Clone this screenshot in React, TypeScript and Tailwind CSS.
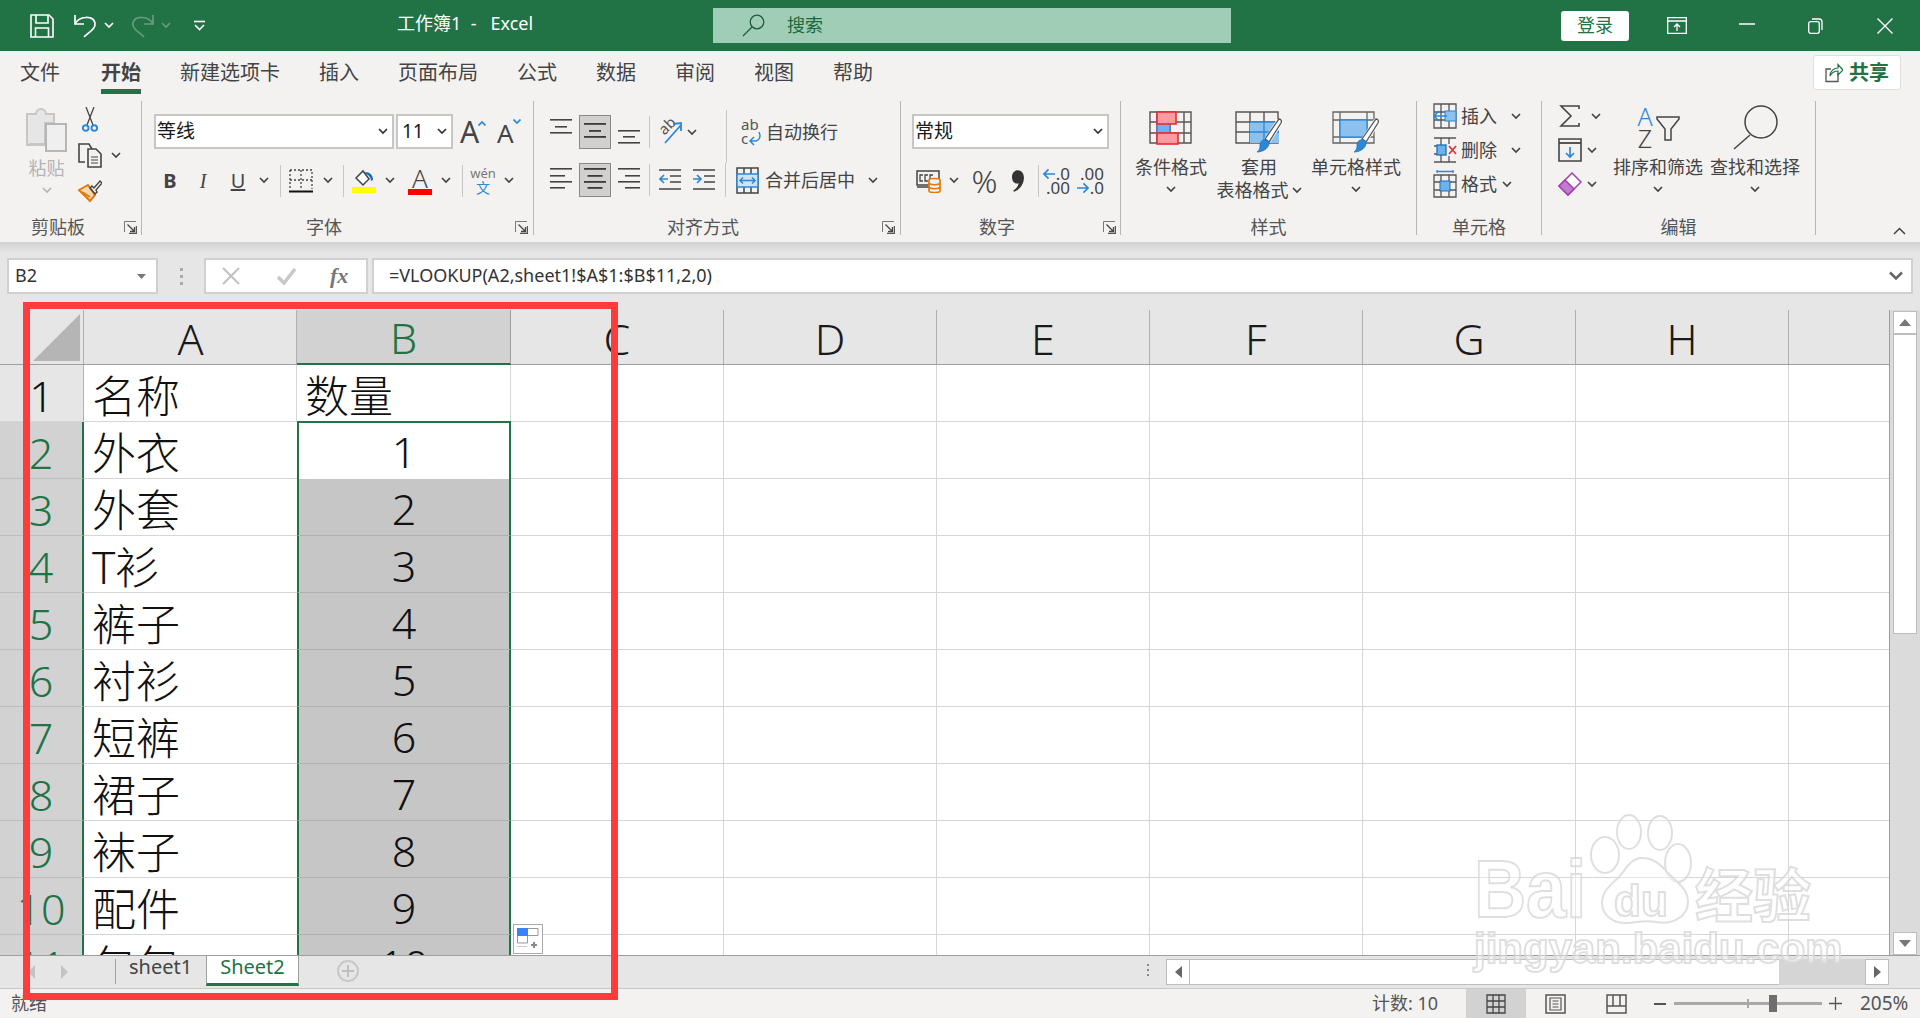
import React from "react";

function Chev({ color = "#444" }: { color?: string }) {
  return (
    <svg width="10" height="7" viewBox="0 0 10 7" className="shrink-0">
      <path d="M1 1l4 4 4-4" fill="none" stroke={color} strokeWidth="1.7" />
    </svg>
  );
}

function Launcher() {
  return (
    <svg width="13" height="13" viewBox="0 0 13 13" className="shrink-0">
      <path d="M0.5 11V0.5H12" fill="none" stroke="#777" />
      <path d="M12.5 5v7.5H5" fill="none" stroke="#555" strokeWidth="1.4" />
      <path d="M3.5 3.5l7 7M6 10.5h4.5V6" fill="none" stroke="#444" strokeWidth="1.3" />
    </svg>
  );
}

function VSep({ className }: { className: string }) {
  return <div className={`w-px bg-[#c8c6c4] shrink-0 ${className}`} />;
}

function Combo({ className, text, textClass }: { className: string; text: string; textClass?: string }) {
  return (
    <div className={`h-[35px] bg-white border-2 border-[#c8c6c4] flex items-center justify-between pl-[1px] pr-[4px] text-[19px] text-[#1a1a1a] shrink-0 ${className}`}>
      <span className={textClass}>{text}</span>
      <Chev color="#333" />
    </div>
  );
}

function Group({ className, label, labelClass, launcherClass, children }: { className: string; label: string; labelClass: string; launcherClass?: string; children: React.ReactNode }) {
  return (
    <div className={`h-[134px] border-r border-[#b8b6b4] flex flex-col shrink-0 ${className}`}>
      <div className="h-[110px]">{children}</div>
      <div className="h-[24px] pt-[8px] flex items-center">
        <div className={`text-center text-[18px] leading-[16px] text-[#555] ${labelClass}`}>{label}</div>
        {launcherClass && <div className={launcherClass}><Launcher /></div>}
      </div>
    </div>
  );
}

// alignment glyph: long / short lines, rows are y offsets inside a 34px tall box
function Lines({ rows, align }: { rows: number[]; align: "l" | "c" | "r" }) {
  const short = rows.length === 3 ? 12 : 15;
  return (
    <svg width="22" height="34" viewBox="0 0 22 34" className="shrink-0">
      {rows.map((y, i) => {
        const w = i % 2 === 1 ? short : 22;
        const x = align === "l" ? 0 : align === "r" ? 22 - w : (22 - w) / 2;
        return <rect key={y} x={x} y={y} width={w} height="1.6" fill="#444" />;
      })}
    </svg>
  );
}

function ToggleBtn({ rows }: { rows: number[] }) {
  const short = rows.length === 3 ? 12 : 15;
  return (
    <div className="w-[32px] h-[34px] ml-[7px] mr-[7px] bg-[#d2d0ce] border border-[#8a8886] flex items-center justify-center shrink-0">
      <svg width="22" height="32" viewBox="0 0 22 32">
        {rows.map((y, i) => {
          const w = i % 2 === 1 ? short : 22;
          return <rect key={y} x={(22 - w) / 2} y={y} width={w} height="1.8" fill="#3b3a39" />;
        })}
      </svg>
    </div>
  );
}

function BigBtn({ className, icon, children }: { className: string; icon: React.ReactNode; children: React.ReactNode }) {
  return (
    <div className={`flex flex-col items-center pt-[10px] shrink-0 ${className}`}>
      <div className="h-[42px] flex items-start">{icon}</div>
      <div className="mt-[3px] text-[18px] leading-[22px] text-[#444] text-center whitespace-nowrap">{children}</div>
    </div>
  );
}

function SmallChevBelow() {
  return (
    <div className="h-[22px] flex items-center justify-center">
      <Chev />
    </div>
  );
}

/* ---------- drawn icons ---------- */

const SaveIcon = () => (
  <svg width="24" height="24" viewBox="0 0 24 24" fill="none" stroke="#fff" strokeWidth="1.6">
    <path d="M1 1h18l4 4v18H1z" />
    <path d="M6 1v8h12V1M5.500 23v-9h13v9" />
  </svg>
);
const UndoIcon = () => (
  <svg width="24" height="25" viewBox="0 0 24 25" fill="none" stroke="#fff" strokeWidth="1.7">
    <path d="M2 2v9h9" />
    <path d="M2 11C6 3 20 2 22 10c1 6-6 9-11 14" />
  </svg>
);
const RedoIcon = () => (
  <svg width="24" height="25" viewBox="0 0 24 25" fill="none" stroke="#fff" strokeWidth="1.7" opacity="0.3">
    <path d="M22 2v9h-9" />
    <path d="M22 11C18 3 4 2 2 10c-1 6 6 9 11 14" />
  </svg>
);

const PasteIcon = () => (
  <svg width="41" height="46" viewBox="0 0 41 46">
    <path d="M1 7h9a5 5 0 0 1 10 0h8v9H19v22H1z" fill="#e6e6e6" stroke="#c6c6c6" strokeWidth="2" />
    <path d="M3 36h16v3H3z" fill="#c6c6c6" />
    <rect x="20" y="17" width="20" height="27" fill="#efefef" stroke="#b6b6b6" strokeWidth="2" />
  </svg>
);
const ScissorsIcon = () => (
  <svg width="16" height="25" viewBox="0 0 16 25" fill="none">
    <path d="M4 0l7 18M12 0L5 18" stroke="#444" strokeWidth="1.3" />
    <circle cx="3.700" cy="21" r="2.800" stroke="#2b88d8" strokeWidth="1.900" />
    <circle cx="12.300" cy="21" r="2.800" stroke="#2b88d8" strokeWidth="1.900" />
  </svg>
);
const CopyIcon = () => (
  <svg width="24" height="25" viewBox="0 0 24 25" fill="none" stroke="#444" strokeWidth="1.6">
    <path d="M7 19H1V1h10l3 5" />
    <path d="M10 6h8l5 5v13H10z" fill="#f3f2f1" />
    <path d="M13 14h7M13 17h7M13 20h7" strokeWidth="1.2" />
  </svg>
);
const PainterIcon = () => (
  <svg width="24" height="24" viewBox="0 0 24 24">
    <path d="M1 11l9-5 7 10-5 6z" fill="#f8d9b4" stroke="#e3780c" strokeWidth="2" />
    <path d="M4 13l8 5" stroke="#e3780c" strokeWidth="2" />
    <path d="M12 9l2-2 2 2 6-7 2 2-6 7 1 2-2 2z" fill="none" stroke="#444" strokeWidth="1.400" />
  </svg>
);
const BorderIcon = () => (
  <svg width="24" height="24" viewBox="0 0 24 24" fill="none">
    <path d="M1 1h22v19M1 1v19M12 1v19M1 11h22" stroke="#444" strokeWidth="1.300" strokeDasharray="2 2" />
    <path d="M0 22.500h24" stroke="#111" strokeWidth="2" />
  </svg>
);
const FillIcon = () => (
  <svg width="24" height="24" viewBox="0 0 24 24">
    <path d="M4 9l7-7 6 8-6 6z" fill="#fff" stroke="#444" strokeWidth="1.500" />
    <path d="M13 3c5 0 8 3 8 8l-2 1c0-3-2-6-5-7z" fill="#106ebe" />
    <rect x="0" y="18" width="24" height="6" fill="#ffff00" />
  </svg>
);
const CurrencyIcon = () => (
  <svg width="25" height="24" viewBox="0 0 25 24" fill="none">
    <rect x="1" y="2" width="22" height="14" stroke="#444" strokeWidth="1.500" />
    <path d="M7 6H4v6h3M12 6H9v6h3M17 6h-3v6" stroke="#444" strokeWidth="1.300" />
    <path d="M1 18h13" stroke="#444" strokeWidth="1.500" />
    <path d="M13 11c0-2 11-2 11 0v11c0 2-11 2-11 0z" fill="#f3f2f1" stroke="#e3780c" strokeWidth="1.700" />
    <path d="M13 14.500c3 1.500 8 1.500 11 0M13 18.500c3 1.500 8 1.500 11 0" stroke="#e3780c" strokeWidth="1.700" />
  </svg>
);
const CondIcon = () => (
  <svg width="44" height="34" viewBox="0 0 44 34" fill="none">
    <path d="M1 1h41v31H1zM8 1v31M21 1v31M35 1v31M1 11h41M1 22h41" stroke="#555" strokeWidth="1.400" />
    <rect x="8" y="11" width="13" height="11" fill="#6fb1ea" stroke="#2b7cd3" />
    <rect x="8" y="1" width="19" height="12" fill="#ff9aa2" stroke="#e62e2e" strokeWidth="1.600" />
    <rect x="8" y="22" width="21" height="11" fill="#ff9aa2" stroke="#e62e2e" strokeWidth="1.600" />
  </svg>
);
const BrushStroke = () => (
  <g>
    <path d="M45 10L32 30" stroke="#fff" strokeWidth="7" />
    <path d="M44 8c2 0 3 2 2 4L34 31l-4-3z" fill="#fff" stroke="#555" strokeWidth="1.300" />
    <path d="M29 29c3-1 6 1 5 4-1 5-7 8-12 8 3-2 3-5 3-7 0-3 2-5 4-5z" fill="#2b88d8" stroke="#1c6fb8" strokeWidth="0.800" />
  </g>
);
const TableStyleIcon = () => (
  <svg width="48" height="42" viewBox="0 0 48 42" fill="none">
    <path d="M1 1h42v31H1zM15 1v31M29 1v31M1 11h42M1 21h42" stroke="#555" strokeWidth="1.400" />
    <rect x="15" y="11" width="29" height="21" fill="#8cc0ef" />
    <path d="M15 11h29M15 21h29M29 11v21" stroke="#2b88d8" strokeWidth="1.300" />
    <BrushStroke />
  </svg>
);
const CellStyleIcon = () => (
  <svg width="48" height="42" viewBox="0 0 48 42" fill="none">
    <path d="M1 1h41v31H1zM8 1v31M35 1v31M1 9h41M1 26h41" stroke="#666" strokeWidth="1.300" />
    <rect x="8" y="9" width="27" height="17" fill="#8cc0ef" stroke="#2b88d8" strokeWidth="1.300" />
    <BrushStroke />
  </svg>
);
const InsertIcon = () => (
  <svg width="24" height="26" viewBox="0 0 24 26" fill="none">
    <path d="M1 1h22v24H1zM1 9h22M1 17h22M8 1v24M16 1v24" stroke="#555" strokeWidth="1.300" />
    <rect x="12" y="8" width="11" height="10" fill="#8cc0ef" stroke="#2b88d8" />
    <path d="M14 13H1M6 8l-5 5 5 5" stroke="#2b88d8" strokeWidth="1.700" />
  </svg>
);
const DeleteIcon = () => (
  <svg width="24" height="26" viewBox="0 0 24 26" fill="none">
    <path d="M1 1h22M1 25h22M1 9h10M1 17h10M8 1v24M16 1v6M16 19v6" stroke="#555" strokeWidth="1.300" />
    <rect x="4" y="8" width="9" height="10" fill="#6fb1ea" stroke="#1c6fb8" strokeWidth="1.300" />
    <path d="M16 9l7 8M23 9l-7 8" stroke="#e8323c" strokeWidth="1.800" />
  </svg>
);
const FormatIcon = () => (
  <svg width="24" height="28" viewBox="0 0 24 28" fill="none">
    <path d="M1 5h22v22H1zM1 12h22M1 20h22M8 5v22M16 5v22" stroke="#555" strokeWidth="1.300" />
    <rect x="7" y="11" width="10" height="10" fill="#6fb1ea" stroke="#1c6fb8" />
    <path d="M4 1.500h16M4 0v3M20 0v3" stroke="#2b88d8" strokeWidth="1.300" />
  </svg>
);
const EraserIcon = () => (
  <svg width="24" height="24" viewBox="0 0 24 24">
    <path d="M14 1l9 9-13 13-9-9z" fill="#fff" stroke="#a23fb0" strokeWidth="1.500" />
    <path d="M7 8l9 9-6 6-9-9z" fill="#c27bd0" stroke="#a23fb0" strokeWidth="1.500" />
  </svg>
);

/* ---------- data ---------- */

const TABS = ["新建选项卡", "插入", "页面布局", "公式", "数据", "审阅", "视图", "帮助"];
const COLS = ["C", "D", "E", "F", "G", "H"];
const ROWS: [string, string, string][] = [
  ["2", "外衣", "1"],
  ["3", "外套", "2"],
  ["4", "T衫", "3"],
  ["5", "裤子", "4"],
  ["6", "衬衫", "5"],
  ["7", "短裤", "6"],
  ["8", "裙子", "7"],
  ["9", "袜子", "8"],
  ["10", "配件", "9"],
  ["11", "包包", "10"],
];

function BlankCells() {
  return (
    <>
      {COLS.map((c) => (
        <div key={c} className="w-[213px] h-full border-r border-[#d6d6d6] shrink-0" />
      ))}
      <div className="flex-1 h-full" />
    </>
  );
}

function Ribbon() {
  return (
    <div className="h-[141px] bg-[#f3f2f1] flex items-start">
      {/* clipboard */}
      <Group className="w-[142px]" label="剪贴板" labelClass="w-[116px]" launcherClass="ml-[8px]">
        <div className="flex pl-[26px] pt-[6px]">
          <div className="w-[41px] flex flex-col items-center shrink-0">
            <PasteIcon />
            <div className="mt-[4px] text-[18px] leading-[22px] text-[#b4b4b4]">粘贴</div>
            <div className="mt-[8px]"><Chev color="#b4b4b4" /></div>
          </div>
          <div className="ml-[11px] flex flex-col">
            <div className="ml-[4px] h-[25px]"><ScissorsIcon /></div>
            <div className="mt-[11px] h-[25px] flex items-center">
              <CopyIcon />
              <div className="ml-[9px]"><Chev /></div>
            </div>
            <div className="mt-[11px]"><PainterIcon /></div>
          </div>
        </div>
      </Group>

      {/* font */}
      <Group className="w-[392px]" label="字体" labelClass="w-[364px]" launcherClass="ml-[9px]">
        <div className="pl-[12px] pt-[13px]">
          <div className="flex items-center">
            <Combo className="w-[240px]" text="等线" />
            <Combo className="w-[57px] ml-[2px]" text="11" textClass="ml-[3px]" />
            <div className="ml-[7px] w-[24px] h-[34px] flex items-start shrink-0">
              <span className="text-[30px] leading-[34px] text-[#444]">A</span>
              <svg width="8" height="5" viewBox="0 0 8 5" className="mt-[6px] -ml-[1px] shrink-0"><path d="M0.500 4.500L4 1l3.500 3.500" fill="none" stroke="#2b88d8" strokeWidth="1.700" /></svg>
            </div>
            <div className="ml-[13px] w-[22px] h-[34px] flex items-start shrink-0">
              <span className="text-[26px] leading-[36px] text-[#444]">A</span>
              <svg width="8" height="5" viewBox="0 0 8 5" className="mt-[4px] -ml-[1px] shrink-0"><path d="M0.500 0.500L4 4l3.500-3.500" fill="none" stroke="#2b88d8" strokeWidth="1.700" /></svg>
            </div>
          </div>
          <div className="mt-[14px] h-[35px] flex items-center">
            <div className="w-[32px] text-center text-[20px] font-bold text-[#444]">B</div>
            <div className="w-[34px] text-center text-[20px] italic text-[#444] [font-family:'Liberation_Serif',serif]">I</div>
            <div className="w-[36px] text-center text-[20px] underline text-[#444]">U</div>
            <div className="w-[16px] flex justify-center"><Chev /></div>
            <VSep className="ml-[8px] h-[32px]" />
            <div className="ml-[8px] shrink-0"><BorderIcon /></div>
            <div className="ml-[10px]"><Chev /></div>
            <VSep className="ml-[10px] h-[32px]" />
            <div className="ml-[8px] shrink-0"><FillIcon /></div>
            <div className="ml-[9px]"><Chev /></div>
            <div className="ml-[13px] w-[24px] h-[28px] flex flex-col items-center shrink-0">
              <span className="text-[26px] leading-[22px] font-light text-[#444]">A</span>
              <div className="w-[24px] h-[6px] bg-[#ff0000]" />
            </div>
            <div className="ml-[9px]"><Chev /></div>
            <VSep className="ml-[11px] h-[32px]" />
            <div className="ml-[9px] w-[22px] flex flex-col items-center shrink-0">
              <span className="text-[13px] leading-[13px] text-[#777]">wén</span>
              <span className="text-[14px] leading-[15px] text-[#2b88d8]">文</span>
            </div>
            <div className="ml-[10px]"><Chev /></div>
          </div>
        </div>
      </Group>

      {/* alignment */}
      <Group className="w-[367px]" label="对齐方式" labelClass="w-[338px]" launcherClass="ml-[10px]">
        <div className="pl-[16px] pt-[14px]">
          <div className="h-[34px] flex items-center">
            <Lines rows={[4, 11, 17]} align="c" />
            <ToggleBtn rows={[7, 14, 20]} />
            <Lines rows={[15, 21, 27]} align="c" />
            <VSep className="ml-[9px] h-[32px]" />
            <div className="ml-[8px] w-[25px] h-[26px] relative shrink-0">
              <span className="absolute left-0 top-[-1px] text-[15px] leading-[15px] text-[#555] -rotate-45 origin-center">ab</span>
              <svg width="25" height="26" viewBox="0 0 25 26" fill="none" className="absolute left-0 top-0">
                <path d="M7 24L23 6M15 5l8-1v8" stroke="#2b88d8" strokeWidth="1.800" />
              </svg>
            </div>
            <div className="ml-[4px]"><Chev /></div>
            <VSep className="ml-[29px] -mt-[5px] h-[53px] self-start" />
            <div className="ml-[14px] w-[21px] h-[28px] relative text-[15px] leading-[13px] text-[#555] shrink-0">
              <span className="absolute left-0 top-0">ab</span>
              <span className="absolute left-0 top-[14px]">c</span>
              <svg width="21" height="28" viewBox="0 0 21 28" fill="none" className="absolute left-0 top-0">
                <path d="M18 14c2 4 1 8-3 9H9M13 19l-4 4 4 4" stroke="#2b88d8" strokeWidth="1.500" />
              </svg>
            </div>
            <span className="ml-[4px] text-[18px] text-[#444] whitespace-nowrap">自动换行</span>
          </div>
          <div className="mt-[14px] h-[34px] flex items-center">
            <Lines rows={[5, 12, 18, 24]} align="l" />
            <ToggleBtn rows={[4, 11, 17, 23]} />
            <Lines rows={[5, 12, 18, 24]} align="r" />
            <VSep className="ml-[9px] h-[32px]" />
            <svg width="22" height="24" viewBox="0 0 22 24" fill="none" className="ml-[9px] shrink-0">
              <path d="M0 2h22M11 8h11M11 14h11M0 21h22" stroke="#444" strokeWidth="1.600" />
              <path d="M9 11H1M5 7l-4 4 4 4" stroke="#2b88d8" strokeWidth="1.700" />
            </svg>
            <svg width="22" height="24" viewBox="0 0 22 24" fill="none" className="ml-[12px] shrink-0">
              <path d="M0 2h22M11 8h11M11 14h11M0 21h22" stroke="#444" strokeWidth="1.600" />
              <path d="M0 11h8M4 7l4 4-4 4" stroke="#2b88d8" strokeWidth="1.700" />
            </svg>
            <VSep className="ml-[10px] h-[34px]" />
            <svg width="23" height="27" viewBox="0 0 23 27" fill="none" className="ml-[10px] shrink-0">
              <path d="M1 1h21v25H1zM8 1v6M15 1v6M8 20v6M15 20v6" stroke="#444" strokeWidth="1.500" />
              <rect x="1" y="7" width="21" height="13" fill="#cde4f7" stroke="#2b88d8" strokeWidth="1.500" />
              <path d="M4 13.500h15M7 10.500l-3 3 3 3M16 10.500l3 3-3 3" stroke="#2b88d8" strokeWidth="1.500" />
            </svg>
            <span className="ml-[6px] w-[90px] text-[18px] text-[#444] whitespace-nowrap shrink-0">合并后居中</span>
            <div className="ml-[13px]"><Chev /></div>
          </div>
        </div>
      </Group>

      {/* number */}
      <Group className="w-[220px]" label="数字" labelClass="w-[192px]" launcherClass="ml-[10px]">
        <div className="pl-[11px] pt-[13px]">
          <Combo className="w-[197px]" text="常规" />
          <div className="mt-[14px] h-[35px] flex items-center">
            <div className="ml-[4px] shrink-0"><CurrencyIcon /></div>
            <div className="ml-[8px]"><Chev /></div>
            <span className="ml-[12px] w-[27px] text-[32px] leading-[35px] font-light text-[#444] text-center">%</span>
            <svg width="13" height="24" viewBox="0 0 12 22" className="ml-[14px] shrink-0"><path d="M5 1c4 0 6 3 6 7 0 6-4 11-9 13l-1-1c3-2 5-5 5-7-3 1-6-1-6-6 0-4 3-6 5-6z" fill="#333" /></svg>
            <VSep className="ml-[13px] h-[32px]" />
            <div className="ml-[7px] w-[24px] flex flex-col items-end shrink-0 text-[17px] leading-[13px] text-[#444]">
              <div className="flex items-center">
                <svg width="12" height="12" viewBox="0 0 13 12" fill="none"><path d="M13 6H1M6 1L1 6l5 5" stroke="#2b88d8" strokeWidth="1.800" /></svg>
                <span className="ml-[1px]">.0</span>
              </div>
              <span className="mt-[1px]">.00</span>
            </div>
            <div className="ml-[10px] w-[24px] flex flex-col items-end shrink-0 text-[17px] leading-[13px] text-[#444]">
              <span>.00</span>
              <div className="flex items-center mt-[1px]">
                <svg width="12" height="12" viewBox="0 0 13 12" fill="none"><path d="M0 6h12M7 1l5 5-5 5" stroke="#2b88d8" strokeWidth="1.800" /></svg>
                <span className="ml-[1px]">.0</span>
              </div>
            </div>
          </div>
        </div>
      </Group>

      {/* styles */}
      <Group className="w-[296px]" label="样式" labelClass="w-[295px]">
        <div className="flex pl-[7px]">
          <BigBtn className="w-[86px]" icon={<CondIcon />}>
            条件格式
            <SmallChevBelow />
          </BigBtn>
          <BigBtn className="w-[90px]" icon={<TableStyleIcon />}>
            套用
            <div className="mt-[1px] flex items-center justify-center">表格格式<span className="ml-[3px]"><Chev /></span></div>
          </BigBtn>
          <BigBtn className="w-[104px]" icon={<CellStyleIcon />}>
            单元格样式
            <SmallChevBelow />
          </BigBtn>
        </div>
      </Group>

      {/* cells */}
      <Group className="w-[125px]" label="单元格" labelClass="w-[124px]">
        <div className="pl-[16px] flex flex-col gap-[4px]">
          <div className="h-[30px] flex items-center">
            <InsertIcon />
            <span className="ml-[4px] text-[18px] text-[#444]">插入</span>
            <div className="ml-[14px]"><Chev /></div>
          </div>
          <div className="h-[30px] flex items-center">
            <DeleteIcon />
            <span className="ml-[4px] text-[18px] text-[#444]">删除</span>
            <div className="ml-[14px]"><Chev /></div>
          </div>
          <div className="h-[30px] flex items-center">
            <FormatIcon />
            <span className="ml-[4px] text-[18px] text-[#444]">格式</span>
            <div className="ml-[5px]"><Chev /></div>
          </div>
        </div>
      </Group>

      {/* editing */}
      <Group className="w-[274px]" label="编辑" labelClass="w-[273px]">
        <div className="flex pl-[16px]">
          <div className="w-[43px] flex flex-col gap-[4px] shrink-0">
            <div className="h-[30px] flex items-center">
              <svg width="24" height="24" viewBox="0 0 24 24" fill="none" className="shrink-0"><path d="M21 5V2H3l10 10L3 22h18v-3" stroke="#444" strokeWidth="1.600" /></svg>
              <div className="ml-[9px]"><Chev /></div>
            </div>
            <div className="h-[30px] flex items-center">
              <svg width="24" height="24" viewBox="0 0 24 24" fill="none" className="shrink-0">
                <path d="M1 1h22v22H1z" stroke="#444" strokeWidth="1.600" />
                <path d="M1 5h22" stroke="#444" strokeWidth="1.800" />
                <path d="M12 9v10M8 15l4 4 4-4" stroke="#2b88d8" strokeWidth="1.700" />
              </svg>
              <div className="ml-[5px]"><Chev /></div>
            </div>
            <div className="h-[30px] flex items-center">
              <EraserIcon />
              <div className="ml-[5px]"><Chev /></div>
            </div>
          </div>
          <div className="ml-[12px] w-[90px] flex flex-col items-center pt-[4px] shrink-0">
            <div className="h-[45px] w-[44px] flex">
              <div className="w-[18px] flex flex-col items-center text-[25px] leading-[22px]">
                <span className="text-[#2b88d8] font-light">A</span>
                <span className="text-[#444] font-light">Z</span>
              </div>
              <svg width="24" height="26" viewBox="0 0 24 26" fill="none" className="mt-[11px] ml-[2px] shrink-0">
                <path d="M1 1h22v2l-8 10v11H9V13L1 3z" stroke="#444" strokeWidth="1.500" />
              </svg>
            </div>
            <div className="mt-[6px] text-[18px] leading-[22px] text-[#444] whitespace-nowrap">排序和筛选</div>
            <SmallChevBelow />
          </div>
          <div className="ml-[7px] w-[90px] flex flex-col items-center pt-[4px] shrink-0">
            <svg width="46" height="45" viewBox="0 0 46 45" fill="none">
              <circle cx="29" cy="17" r="16" stroke="#444" strokeWidth="1.500" />
              <path d="M18 30L2 44" stroke="#444" strokeWidth="1.500" />
            </svg>
            <div className="mt-[6px] text-[18px] leading-[22px] text-[#444] whitespace-nowrap">查找和选择</div>
            <SmallChevBelow />
          </div>
        </div>
      </Group>

      <div className="flex-1 h-[134px] flex items-end justify-end pr-[14px]">
        <svg width="13" height="8" viewBox="0 0 13 8" fill="none"><path d="M1 7l5.500-5.500L12 7" stroke="#444" strokeWidth="1.500" /></svg>
      </div>
    </div>
  );
}

function Sheet() {
  return (
    <div className="flex-1 min-w-0 bg-white flex flex-col overflow-hidden [font-family:'Noto_Sans','Noto_Sans_CJK_SC',sans-serif] font-light">
      {/* column headers */}
      <div className="h-[55px] flex shrink-0 bg-[#e6e6e6] border-b border-[#9e9e9e] text-[43px] leading-[50px] text-[#1a1a1a]">
        <div className="w-[84px] h-full border-r border-[#b0b0b0] flex items-end justify-end pr-[3px] pb-[3px] shrink-0">
          <svg width="47" height="47" viewBox="0 0 47 47"><path d="M47 0v47H0z" fill="#b5b5b5" /></svg>
        </div>
        <div className="w-[213px] h-full border-r border-[#b0b0b0] pl-[1px] pt-[4px] text-center shrink-0">A</div>
        <div className="w-[214px] h-[55px] bg-[#d2d2d2] border-r border-[#9e9e9e] border-b-[2px] border-b-[#217346] text-[#217346] pt-[3px] text-center shrink-0">B</div>
        {COLS.map((c) => (
          <div key={c} className="w-[213px] h-full border-r border-[#b0b0b0] pt-[4px] text-center shrink-0">{c}</div>
        ))}
      </div>

      {/* row 1 */}
      <div className="h-[57px] flex shrink-0 border-b border-[#d6d6d6] text-[43px] leading-[50px] text-[#111]">
        <div className="w-[84px] h-full bg-[#e6e6e6] border-r border-[#b0b0b0] text-center pt-[6px] shrink-0">1</div>
        <div className="w-[213px] h-full border-r border-[#d6d6d6] pl-[8px] pt-[6px] text-[44px] shrink-0">名称</div>
        <div className="w-[214px] h-full border-r border-[#d6d6d6] pl-[8px] pt-[6px] text-[44px] shrink-0">数量</div>
        <BlankCells />
      </div>

      {/* data rows */}
      {ROWS.map(([n, name, qty], i) => (
        <div key={n} className="h-[57px] flex shrink-0 border-b border-[#d6d6d6] text-[43px] leading-[50px] text-[#111]">
          <div className="w-[84px] h-[57px] bg-[#d2d2d2] border-r-2 border-[#217346] border-b border-b-[#bdbdbd] text-[#217346] text-center pt-[6px] shrink-0">{n}</div>
          <div className="w-[213px] h-full pl-[8px] pt-[6px] text-[44px] shrink-0">{name}</div>
          <div
            className={
              i === 0
                ? "w-[214px] h-[58px] -mt-[1px] bg-white border-x-2 border-t-2 border-[#217346] text-center pt-[4px] shrink-0"
                : "w-[214px] h-[57px] bg-[#c6c6c6] border-x-2 border-[#217346] border-b border-b-[#b0b0b0] text-center pt-[5px] shrink-0"
            }
          >
            {qty}
          </div>
          <BlankCells />
        </div>
      ))}
    </div>
  );
}

export default function App() {
  return (
    <div className="relative w-[1920px] h-[1018px] overflow-hidden flex flex-col bg-[#e6e6e6] [font-family:'Noto_Sans','Noto_Sans_CJK_SC',sans-serif]">
      {/* title bar */}
      <div className="h-[51px] bg-[#217346] flex items-center pl-[30px] text-white shrink-0">
        <SaveIcon />
        <div className="ml-[19px]"><UndoIcon /></div>
        <div className="ml-[7px]"><Chev color="#fff" /></div>
        <div className="ml-[17px]"><RedoIcon /></div>
        <div className="ml-[6px] opacity-30"><Chev color="#fff" /></div>
        <svg width="11" height="11" viewBox="0 0 11 11" fill="none" className="ml-[23px] shrink-0"><path d="M0 1.500h11" stroke="#fff" strokeWidth="1.600" /><path d="M1 5l4.500 4.500L10 5" stroke="#fff" strokeWidth="1.600" /></svg>
        <div className="ml-[192px] w-[316px] text-[18px] whitespace-pre shrink-0 -mt-[5px]">工作簿1  -   Excel</div>
        <div className="w-[518px] h-[35px] bg-[#a0cdb5] flex items-center pl-[29px] -mt-[1px] shrink-0">
          <svg width="23" height="23" viewBox="0 0 23 23" fill="none"><circle cx="15" cy="8" r="6.800" stroke="#1d5c3a" strokeWidth="1.300" /><path d="M10 13L1 22" stroke="#1d5c3a" strokeWidth="1.300" /></svg>
          <span className="ml-[22px] text-[18px] text-[#1a6a3f]">搜索</span>
        </div>
        <div className="ml-[330px] w-[68px] h-[30px] rounded-[3px] bg-white flex items-center justify-center text-[18px] text-[#217346] shrink-0">登录</div>
        <svg width="20" height="17" viewBox="0 0 20 17" fill="none" className="ml-[38px] shrink-0"><path d="M0.700 0.700h18.600v15.600H0.700zM0.700 4h18.600" stroke="#fff" strokeWidth="1.300" /><path d="M10 14V7M7 10l3-3 3 3" stroke="#fff" strokeWidth="1.300" /></svg>
        <svg width="16" height="2" viewBox="0 0 16 2" className="ml-[52px] -mt-[3px] shrink-0"><path d="M0 1h16" stroke="#fff" strokeWidth="1.500" /></svg>
        <svg width="15" height="16" viewBox="0 0 15 16" fill="none" className="ml-[53px] shrink-0"><rect x="0.700" y="3.700" width="10.600" height="11.600" rx="2" stroke="#fff" strokeWidth="1.300" /><path d="M4 1h7a3 3 0 0 1 3 3v8" stroke="#fff" strokeWidth="1.300" /></svg>
        <svg width="16" height="16" viewBox="0 0 16 16" fill="none" className="ml-[54px] shrink-0"><path d="M0.500 0.500l15 15M15.500 0.500l-15 15" stroke="#fff" strokeWidth="1.400" /></svg>
      </div>

      {/* tab row */}
      <div className="h-[50px] bg-[#f3f2f1] flex pl-[20px] pt-[9px] gap-[39px] text-[20px] leading-[26px] text-[#444] shrink-0">
        <span>文件</span>
        <span className="ml-[2px] h-[34px] border-b-[5px] border-[#217346] font-bold">开始</span>
        {TABS.map((t) => (
          <span key={t}>{t}</span>
        ))}
        <div className="ml-auto mr-[19px] -mt-[5px] w-[88px] h-[35px] rounded-[3px] bg-white border border-[#e1dfdd] flex items-center justify-center">
          <svg width="18" height="20" viewBox="0 0 18 20" fill="none" className="shrink-0"><path d="M13 10v8.500H1V6h5" stroke="#555" strokeWidth="1.300" /><path d="M5 13c0-5 4-8 8-8V1.500L18 7l-5 5V8c-3 0-6 1-8 5z" stroke="#217346" strokeWidth="1.200" /></svg>
          <span className="ml-[6px] font-bold text-[#217346]">共享</span>
        </div>
      </div>

      <Ribbon />

      {/* formula bar */}
      <div className="h-[68px] shrink-0 bg-gradient-to-b from-[#d2d2d2] from-0% to-[#e6e6e6] to-[16%] pt-[16px] pl-[7px] flex items-start">
        <div className="w-[151px] h-[36px] bg-white border-2 border-[#d0d0d0] flex items-center justify-between pl-[6px] pr-[10px] text-[18px] leading-[24px] text-[#333] shrink-0">
          <span className="-mt-[2px]">B2</span>
          <svg width="9" height="5" viewBox="0 0 9 5"><path d="M0 0h9L4.500 5z" fill="#777" /></svg>
        </div>
        <div className="w-[46px] h-[36px] flex flex-col items-center justify-center gap-[4px] shrink-0">
          <div className="w-[3px] h-[3px] bg-[#aaa]" />
          <div className="w-[3px] h-[3px] bg-[#aaa]" />
          <div className="w-[3px] h-[3px] bg-[#aaa]" />
        </div>
        <div className="w-[164px] h-[36px] bg-white border-2 border-[#d0d0d0] flex items-center pl-[16px] shrink-0">
          <svg width="18" height="18" viewBox="0 0 18 18" fill="none"><path d="M1 1l16 16M17 1L1 17" stroke="#c0c0c0" strokeWidth="2" /></svg>
          <svg width="20" height="18" viewBox="0 0 20 18" fill="none" className="ml-[37px]"><path d="M1 10l6 6L18 2" stroke="#c8c8c8" strokeWidth="3.500" /></svg>
          <span className="ml-[33px] text-[22px] leading-[26px] italic font-bold text-[#777] [font-family:'Liberation_Serif',serif]">fx</span>
        </div>
        <div className="ml-[4px] w-[1541px] h-[36px] bg-white border-2 border-[#d0d0d0] flex items-center justify-between pl-[15px] pr-[8px] text-[18px] leading-[24px] text-[#333] shrink-0">
          <span className="-mt-[2px]">=VLOOKUP(A2,sheet1!$A$1:$B$11,2,0)</span>
          <svg width="14" height="11" viewBox="0 0 14 11" fill="none"><path d="M1 1.500l6 6 6-6" stroke="#666" strokeWidth="2.500" /></svg>
        </div>
      </div>

      {/* sheet + vertical scroll */}
      <div className="h-[645px] flex shrink-0">
        <Sheet />
        <div className="w-[31px] h-full bg-[#dbdbdb] border-l border-[#9e9e9e] flex flex-col items-center pt-[1px] shrink-0">
          <div className="w-[24px] h-[23px] bg-white border border-[#bdbdbd] flex items-center justify-center">
            <svg width="12" height="7" viewBox="0 0 12 7"><path d="M0 7h12L6 0z" fill="#777" /></svg>
          </div>
          <div className="w-[24px] h-[300px] bg-white border border-[#bdbdbd]" />
          <div className="mt-auto w-[24px] h-[23px] bg-white border border-[#bdbdbd] flex items-center justify-center">
            <svg width="12" height="7" viewBox="0 0 12 7"><path d="M0 0h12L6 7z" fill="#777" /></svg>
          </div>
        </div>
      </div>

      {/* sheet tabs */}
      <div className="h-[34px] shrink-0 bg-[#e6e6e6] border-t border-[#9e9e9e] border-b border-b-[#c8c8c8] flex items-start text-[20px] leading-[22px]">
        <svg width="7" height="14" viewBox="0 0 7 14" className="ml-[28px] mt-[9px] shrink-0"><path d="M7 0v14L0 7z" fill="#c4c4c4" /></svg>
        <svg width="7" height="14" viewBox="0 0 7 14" className="ml-[26px] mt-[9px] shrink-0"><path d="M0 0v14l7-7z" fill="#c4c4c4" /></svg>
        <div className="ml-[47px] mt-[3px] w-px h-[25px] bg-[#a0a0a0] shrink-0" />
        <span className="ml-[13px] w-[77px] text-[#444] shrink-0">sheet1</span>
        <div className="w-[93px] h-[30px] bg-white border-x border-[#a0a0a0] border-b-[3px] border-b-[#217346] text-center text-[#217346] shrink-0">Sheet2</div>
        <div className="ml-[38px] mt-[4px] w-[22px] h-[22px] rounded-full border-2 border-[#c8c8c8] flex items-center justify-center shrink-0">
          <svg width="12" height="12" viewBox="0 0 12 12"><path d="M6 0v12M0 6h12" stroke="#c0c0c0" strokeWidth="2" /></svg>
        </div>
        <div className="ml-[788px] mt-[8px] flex flex-col gap-[3px] shrink-0">
          <div className="w-[2px] h-[2px] bg-[#888]" />
          <div className="w-[2px] h-[2px] bg-[#888]" />
          <div className="w-[2px] h-[2px] bg-[#888]" />
        </div>
        <div className="ml-[17px] mt-[3px] w-[24px] h-[26px] bg-white border border-[#bdbdbd] flex items-center justify-center shrink-0">
          <svg width="7" height="12" viewBox="0 0 7 12"><path d="M7 0v12L0 6z" fill="#666" /></svg>
        </div>
        <div className="mt-[3px] w-[589px] h-[26px] bg-white border-y border-[#bdbdbd] shrink-0" />
        <div className="mt-[3px] w-[86px] h-[26px] bg-[#d5d5d5] shrink-0" />
        <div className="mt-[3px] w-[24px] h-[26px] bg-white border border-[#bdbdbd] flex items-center justify-center shrink-0">
          <svg width="7" height="12" viewBox="0 0 7 12"><path d="M0 0v12l7-6z" fill="#666" /></svg>
        </div>
      </div>

      {/* status bar */}
      <div className="flex-1 bg-[#f3f2f1] flex items-center pl-[11px] text-[18px] text-[#555]">
        <span className="w-[1361px] shrink-0">就绪</span>
        <span className="w-[94px] shrink-0">计数: 10</span>
        <div className="w-[60px] h-full bg-[#d2d2d2] flex items-center justify-center shrink-0">
          <svg width="20" height="20" viewBox="0 0 20 20" fill="none"><path d="M1 1h18v18H1zM7 1v18M13 1v18M1 7h18M1 13h18" stroke="#444" strokeWidth="1.300" /></svg>
        </div>
        <svg width="21" height="20" viewBox="0 0 21 20" fill="none" className="ml-[19px] shrink-0"><path d="M1 1h19v18H1z" stroke="#555" strokeWidth="1.500" /><path d="M5 4h11v12H5zM7.500 7h6M7.500 10h6M7.500 13h6" stroke="#555" strokeWidth="1.200" /></svg>
        <svg width="21" height="20" viewBox="0 0 21 20" fill="none" className="ml-[40px] shrink-0"><path d="M1 1h19v18H1zM1 12h19M7 1v11M14 1v11" stroke="#555" strokeWidth="1.500" /></svg>
        <div className="ml-[27px] w-[12px] h-[2px] bg-[#555] shrink-0" />
        <div className="ml-[8px] w-[148px] h-[3px] bg-[#a8a8a8] flex items-center shrink-0">
          <div className="ml-[73px] w-[2px] h-[9px] bg-[#a8a8a8] shrink-0" />
          <div className="ml-[20px] w-[8px] h-[17px] bg-[#6e6e6e] shrink-0" />
        </div>
        <svg width="13" height="13" viewBox="0 0 13 13" className="ml-[7px] shrink-0"><path d="M6.500 0v13M0 6.500h13" stroke="#555" strokeWidth="1.300" /></svg>
        <span className="ml-[18px] text-[19px] whitespace-nowrap">205%</span>
      </div>

      {/* paste options tag */}
      <div className="absolute left-[513px] top-[924px] w-[30px] h-[30px] bg-white border border-[#aaa] flex items-center justify-center">
        <svg width="22" height="22" viewBox="0 0 22 22" fill="none">
          <rect x="0" y="0" width="11" height="8" fill="#3b82f6" />
          <path d="M11 0.500h10v7H11M0.500 8v7h10V8" stroke="#999" />
          <path d="M0.500 18.500h10" stroke="#999" strokeDasharray="1 1" />
          <path d="M17 14v6M14 17h6" stroke="#888" strokeWidth="2" />
        </svg>
      </div>

      {/* red annotation box */}
      <div className="absolute left-[23px] top-[302px] w-[595px] h-[698px] border-[7px] border-[#ff3b3b] pointer-events-none" />

      {/* watermark */}
      <div className="absolute left-[1474px] top-[814px] w-[346px] h-[165px] pointer-events-none opacity-80 blur-[0.5px]">
        <svg width="346" height="125" viewBox="0 0 346 125" fill="none" className="absolute left-0 top-0">
          <ellipse cx="155" cy="18" rx="12" ry="17" fill="#ffffff" fillOpacity="0.5" stroke="#d8d8d8" strokeWidth="2" />
          <ellipse cx="186" cy="19" rx="12" ry="17" fill="#ffffff" fillOpacity="0.5" stroke="#d8d8d8" strokeWidth="2" />
          <ellipse cx="131" cy="41" rx="14" ry="18" fill="#ffffff" fillOpacity="0.5" stroke="#d8d8d8" strokeWidth="2" />
          <ellipse cx="204" cy="49" rx="13" ry="19" fill="#ffffff" fillOpacity="0.5" stroke="#d8d8d8" strokeWidth="2" />
          <path d="M168 44c-12 0-16 12-24 20-8 7-16 14-16 25 0 14 14 21 26 20 10-1 18-3 28-1 14 3 32-4 32-20 0-13-10-19-18-27-8-8-14-17-28-17z" fill="#ffffff" fillOpacity="0.5" stroke="#d8d8d8" strokeWidth="2" />
        </svg>
        <div className="absolute left-0 top-[30px] origin-left scale-x-[0.88] text-[82px] leading-[90px] font-bold text-white/50 [-webkit-text-stroke:2px_#d8d8d8] [font-family:'Liberation_Sans',sans-serif]">Bai</div>
        <div className="absolute left-[140px] top-[62px] text-[44px] leading-[50px] font-bold text-white/50 [-webkit-text-stroke:2px_#d8d8d8] [font-family:'Liberation_Sans',sans-serif]">du</div>
        <div className="absolute left-[221px] top-[42px] text-[58px] leading-[72px] font-bold text-white/50 [-webkit-text-stroke:2px_#d8d8d8] [font-family:'Noto_Sans_CJK_SC',sans-serif] whitespace-nowrap">经验</div>
        <div className="absolute left-[0px] top-[110px] text-[42px] leading-[50px] font-bold text-white/50 [-webkit-text-stroke:2px_#d8d8d8] [font-family:'Liberation_Sans',sans-serif] whitespace-nowrap">jingyan.baidu.com</div>
      </div>
    </div>
  );
}
